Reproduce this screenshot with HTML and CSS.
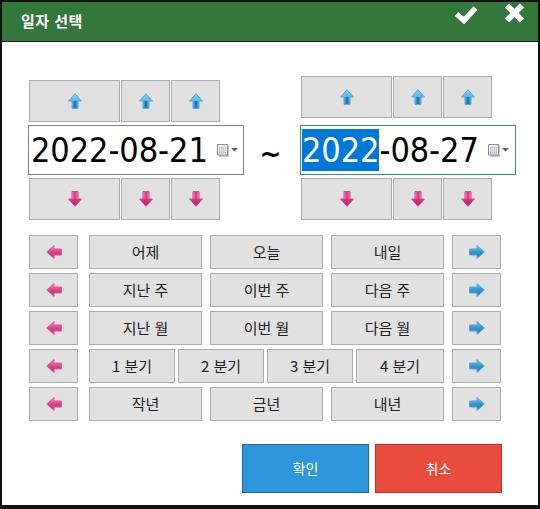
FILE: index.html
```html
<!DOCTYPE html>
<html lang="ko">
<head>
    <meta charset="UTF-8">
    <meta name="viewport" content="width=device-width, initial-scale=1.0">
    <title>일자 선택</title>
    <link rel="stylesheet" href="styles.css">
</head>
<body>
    <svg class="sprite" xmlns="http://www.w3.org/2000/svg">
        <defs>
            <linearGradient id="blueHead" x1="0" y1="0" x2="0" y2="1">
                <stop offset="0" stop-color="#8ed2f2"/>
                <stop offset="1" stop-color="#2f9ad6"/>
            </linearGradient>
            <linearGradient id="blueStem" x1="0" y1="0" x2="1" y2="0">
                <stop offset="0" stop-color="#4fb0e0"/>
                <stop offset="0.5" stop-color="#0a6cb4"/>
                <stop offset="1" stop-color="#4fb0e0"/>
            </linearGradient>
            <linearGradient id="blueSide" x1="0" y1="0" x2="0" y2="1">
                <stop offset="0" stop-color="#7cc8ee"/>
                <stop offset="0.5" stop-color="#2f96d2"/>
                <stop offset="1" stop-color="#2478ae"/>
            </linearGradient>
            <linearGradient id="pinkHead" x1="0" y1="0" x2="0" y2="1">
                <stop offset="0" stop-color="#e83a8c"/>
                <stop offset="1" stop-color="#c2256f"/>
            </linearGradient>
            <linearGradient id="pinkStem" x1="0" y1="0" x2="1" y2="0">
                <stop offset="0" stop-color="#f48cbc"/>
                <stop offset="0.5" stop-color="#e0207c"/>
                <stop offset="1" stop-color="#f48cbc"/>
            </linearGradient>
            <linearGradient id="pinkSide" x1="0" y1="0" x2="0" y2="1">
                <stop offset="0" stop-color="#f288ba"/>
                <stop offset="0.5" stop-color="#e2408c"/>
                <stop offset="1" stop-color="#b83078"/>
            </linearGradient>
            <symbol id="arrow-up" viewBox="0 0 14 16">
                <path d="M7 .7 13.400 8H10v7.400H4V8H.6Z" fill="url(#blueHead)" stroke="#5aa6cf"/>
                <path d="M4.500 8h5v7h-5z" fill="url(#blueStem)"/>
            </symbol>
            <symbol id="arrow-down" viewBox="0 0 14 16">
                <path d="M4 .6h6V8h3.400L7 15.300.6 8H4Z" fill="url(#pinkHead)" stroke="#bf4c88"/>
                <path d="M4.500 1h5v7h-5z" fill="url(#pinkStem)"/>
            </symbol>
            <symbol id="arrow-left" viewBox="0 0 16 14">
                <path d="M.7 7 8 .6V4h7.400v6H8v3.400Z" fill="url(#pinkSide)" stroke="#d65c9a"/>
            </symbol>
            <symbol id="arrow-right" viewBox="0 0 16 14">
                <path d="M15.300 7 8 .6V4H.6v6H8v3.400Z" fill="url(#blueSide)" stroke="#5aa6cf"/>
            </symbol>
            <symbol id="calendar" viewBox="0 0 21 13">
                <path d="M2 2h10v11H2z" fill="#c4c6ca"/>
                <path d="M.5.5h10v10.500H.5z" fill="#eceef2" stroke="#8e9094"/>
                <path d="M2 3h7v6.500H2z" fill="#b4b8c4"/>
                <path d="M3.500 3v6.500M5.500 3v6.500M7.500 3v6.500M2 5h7M2 7h7" stroke="#eceef2" stroke-width=".7"/>
                <path d="M14 4h7l-3.500 3.500z" fill="#4c5c80"/>
            </symbol>
        </defs>
    </svg>

    <div class="dialog">
        <header class="title-bar">
            <span class="title-text">일자 선택</span>
            <div class="title-icons">
                <svg class="icon-check" viewBox="0 0 24 19"><path d="M2.500 9 10 15.500 21.500 3" fill="none" stroke="#fff" stroke-width="5.500"/></svg>
                <svg class="icon-close" viewBox="0 0 21 20"><path d="M3 2.500 18 17.500M18 2.500 3 17.500" fill="none" stroke="#fff" stroke-width="6"/></svg>
            </div>
        </header>

        <main class="content">
            <section class="range">
                <div class="date-col">
                    <div class="spin-row spin-row-near">
                        <button class="btn spin-wide"><svg class="arrow-v"><use href="#arrow-up"/></svg></button>
                        <button class="btn spin"><svg class="arrow-v"><use href="#arrow-up"/></svg></button>
                        <button class="btn spin"><svg class="arrow-v"><use href="#arrow-up"/></svg></button>
                    </div>
                    <div class="date-input">
                        <span class="date-text">2022-08-21</span>
                        <svg class="calendar"><use href="#calendar"/></svg>
                    </div>
                    <div class="spin-row">
                        <button class="btn spin-wide"><svg class="arrow-v"><use href="#arrow-down"/></svg></button>
                        <button class="btn spin"><svg class="arrow-v"><use href="#arrow-down"/></svg></button>
                        <button class="btn spin"><svg class="arrow-v"><use href="#arrow-down"/></svg></button>
                    </div>
                </div>

                <div class="tilde">~</div>

                <div class="date-col">
                    <div class="spin-row spin-row-far">
                        <button class="btn spin-wide"><svg class="arrow-v"><use href="#arrow-up"/></svg></button>
                        <button class="btn spin"><svg class="arrow-v"><use href="#arrow-up"/></svg></button>
                        <button class="btn spin"><svg class="arrow-v"><use href="#arrow-up"/></svg></button>
                    </div>
                    <div class="date-input date-input-focus">
                        <span class="date-text"><span class="selected">2022</span>-08-27</span>
                        <svg class="calendar"><use href="#calendar"/></svg>
                    </div>
                    <div class="spin-row">
                        <button class="btn spin-wide"><svg class="arrow-v"><use href="#arrow-down"/></svg></button>
                        <button class="btn spin"><svg class="arrow-v"><use href="#arrow-down"/></svg></button>
                        <button class="btn spin"><svg class="arrow-v"><use href="#arrow-down"/></svg></button>
                    </div>
                </div>
            </section>

            <section class="presets">
                <div class="preset-row">
                    <button class="btn"><svg class="arrow-h"><use href="#arrow-left"/></svg></button>
                    <div class="preset-mid">
                        <button class="btn">어제</button>
                        <button class="btn">오늘</button>
                        <button class="btn">내일</button>
                    </div>
                    <button class="btn"><svg class="arrow-h"><use href="#arrow-right"/></svg></button>
                </div>
                <div class="preset-row">
                    <button class="btn"><svg class="arrow-h"><use href="#arrow-left"/></svg></button>
                    <div class="preset-mid">
                        <button class="btn">지난 주</button>
                        <button class="btn">이번 주</button>
                        <button class="btn">다음 주</button>
                    </div>
                    <button class="btn"><svg class="arrow-h"><use href="#arrow-right"/></svg></button>
                </div>
                <div class="preset-row">
                    <button class="btn"><svg class="arrow-h"><use href="#arrow-left"/></svg></button>
                    <div class="preset-mid">
                        <button class="btn">지난 월</button>
                        <button class="btn">이번 월</button>
                        <button class="btn">다음 월</button>
                    </div>
                    <button class="btn"><svg class="arrow-h"><use href="#arrow-right"/></svg></button>
                </div>
                <div class="preset-row">
                    <button class="btn"><svg class="arrow-h"><use href="#arrow-left"/></svg></button>
                    <div class="preset-mid quarters">
                        <button class="btn">1 분기</button>
                        <button class="btn">2 분기</button>
                        <button class="btn">3 분기</button>
                        <button class="btn">4 분기</button>
                    </div>
                    <button class="btn"><svg class="arrow-h"><use href="#arrow-right"/></svg></button>
                </div>
                <div class="preset-row">
                    <button class="btn"><svg class="arrow-h"><use href="#arrow-left"/></svg></button>
                    <div class="preset-mid">
                        <button class="btn">작년</button>
                        <button class="btn">금년</button>
                        <button class="btn">내년</button>
                    </div>
                    <button class="btn"><svg class="arrow-h"><use href="#arrow-right"/></svg></button>
                </div>
            </section>

            <section class="actions">
                <button class="action action-ok">확인</button>
                <button class="action action-cancel">취소</button>
            </section>
        </main>
    </div>
</body>
</html>
```

FILE: styles.css
```css
* {
    box-sizing: border-box;
}
body {
    margin: 0;
    background-color: #333;
    font-family: "Noto Sans CJK KR", "Noto Sans", sans-serif;
}
.sprite {
    display: block;
    width: 0;
    height: 0;
}
.dialog {
    width: 540px;
    height: 509px;
    border: 2px solid #111;
    border-bottom-width: 4px;
    background-color: #fff;
}
.title-bar {
    display: flex;
    justify-content: space-between;
    height: 40px;
    padding-left: 19px;
    background-color: #33773a;
    border-bottom: 1px solid #1a1a1a;
    color: #fff;
}
.title-text {
    font-size: 15px;
    font-weight: bold;
    letter-spacing: 0.5px;
    line-height: 38px;
}
.title-icons {
    display: flex;
    gap: 26px;
    padding: 1px 13px 0 0;
}
.icon-check {
    width: 24px;
    height: 19px;
    margin-top: 2px;
}
.icon-close {
    width: 21px;
    height: 20px;
}
.content {
    padding: 34px 0 0 26px;
}
.range {
    display: flex;
    align-items: flex-end;
}
.date-col {
    display: flex;
    flex-direction: column;
    width: 216px;
}
.tilde {
    width: 56px;
    padding: 0 3px 41px 0;
    font-family: "DejaVu Sans", sans-serif;
    font-size: 26px;
    font-weight: bold;
    line-height: 50px;
    text-align: center;
    color: #000;
}
.spin-row {
    display: flex;
    gap: 1px;
    margin: 3px 0 0 1px;
}
.spin-row-near {
    margin: 0 0 3px 1px;
}
.spin-row-far {
    margin: 0 0 7px 1px;
}
.btn {
    display: flex;
    align-items: center;
    justify-content: center;
    padding: 0;
    border: 1px solid #adadad;
    background-color: #e1e1e1;
    color: #222;
    font-family: inherit;
    font-size: 15px;
}
.spin-wide {
    width: 91px;
    height: 42px;
}
.spin {
    width: 49px;
    height: 42px;
}
.arrow-v {
    width: 14px;
    height: 16px;
}
.arrow-h {
    width: 16px;
    height: 14px;
}
.date-input {
    display: flex;
    align-items: center;
    height: 50px;
    padding-left: 2px;
    border: 1px solid #808080;
    background-color: #fff;
}
.date-input-focus {
    padding-left: 1px;
    border-color: #2e8ba8;
}
.date-text {
    width: 186px;
    font-family: "DejaVu Sans Condensed", "DejaVu Sans", sans-serif;
    font-size: 34px;
    letter-spacing: -0.1px;
    line-height: 42px;
    color: #000;
}
.selected {
    display: inline-block;
    background-color: #0078d7;
    color: #fff;
}
.calendar {
    width: 21px;
    height: 13px;
}
.presets {
    display: flex;
    flex-direction: column;
    gap: 4px;
    margin: 15px 0 0 1px;
}
.preset-row {
    display: grid;
    grid-template-columns: 49px 358px 49px;
    grid-auto-rows: 34px;
    column-gap: 8px;
}
.preset-mid {
    display: grid;
    grid-template-columns: repeat(3, 113px);
    column-gap: 8px;
    margin-left: 3px;
}
.preset-mid .btn {
    padding-bottom: 2px;
}
.quarters {
    grid-template-columns: 86px 86px 86px 88px;
    column-gap: 3px;
}
.actions {
    display: flex;
    gap: 6px;
    margin: 23px 0 0 214px;
}
.action {
    width: 127px;
    height: 49px;
    padding: 0 0 2px;
    border: 1px solid;
    color: #fff;
    font-family: inherit;
    font-size: 14px;
}
.action-ok {
    background-color: #2d96dc;
    border-color: #1a6aa0;
}
.action-cancel {
    background-color: #e94c3d;
    border-color: #c92a20;
}
```
